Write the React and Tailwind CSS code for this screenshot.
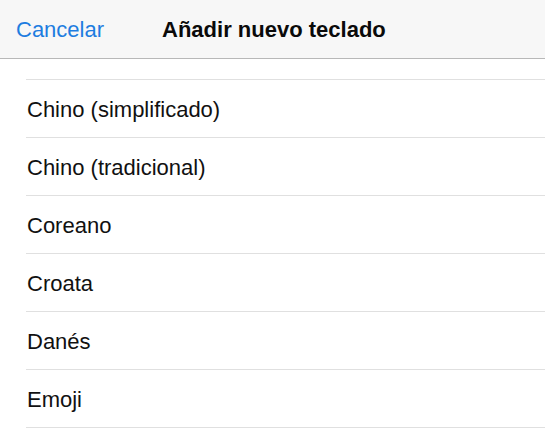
import React from 'react';

const keyboards = [
    "Cherokee",
    "Chino (simplificado)",
    "Chino (tradicional)",
    "Coreano",
    "Croata",
    "Danés",
    "Emoji",
    "Eslovaco",
];

const Row = ({ label }) => (
    <li className="pl-[26px]">
        <div className="h-[58px] flex items-center pl-px pt-px border-b border-[#e0e0e0] text-[22px] text-[#111]">
            {label}
        </div>
    </li>
);

const App = () => {
    return (
        <div className="h-[439px] w-[545px] bg-white overflow-hidden flex flex-col font-['Liberation_Sans',Arial,sans-serif]">
            {/* Nav bar */}
            <div className="h-[59px] shrink-0 bg-[#f7f7f7] border-b border-[#b8b8b8] flex items-center pt-px relative z-10">
                <span className="ml-[16px] text-[22px] text-[#1e7de0]">Cancelar</span>
                <span className="ml-[58px] text-[22px] font-bold text-[#0a0a0a]">Añadir nuevo teclado</span>
            </div>

            {/* List, scrolled so the first row sits under the bar */}
            <div className="flex-1 overflow-hidden">
                <ul className="-mt-[37px]">
                    {keyboards.map((k) => (
                        <Row key={k} label={k} />
                    ))}
                </ul>
            </div>
        </div>
    );
};

export default App;
